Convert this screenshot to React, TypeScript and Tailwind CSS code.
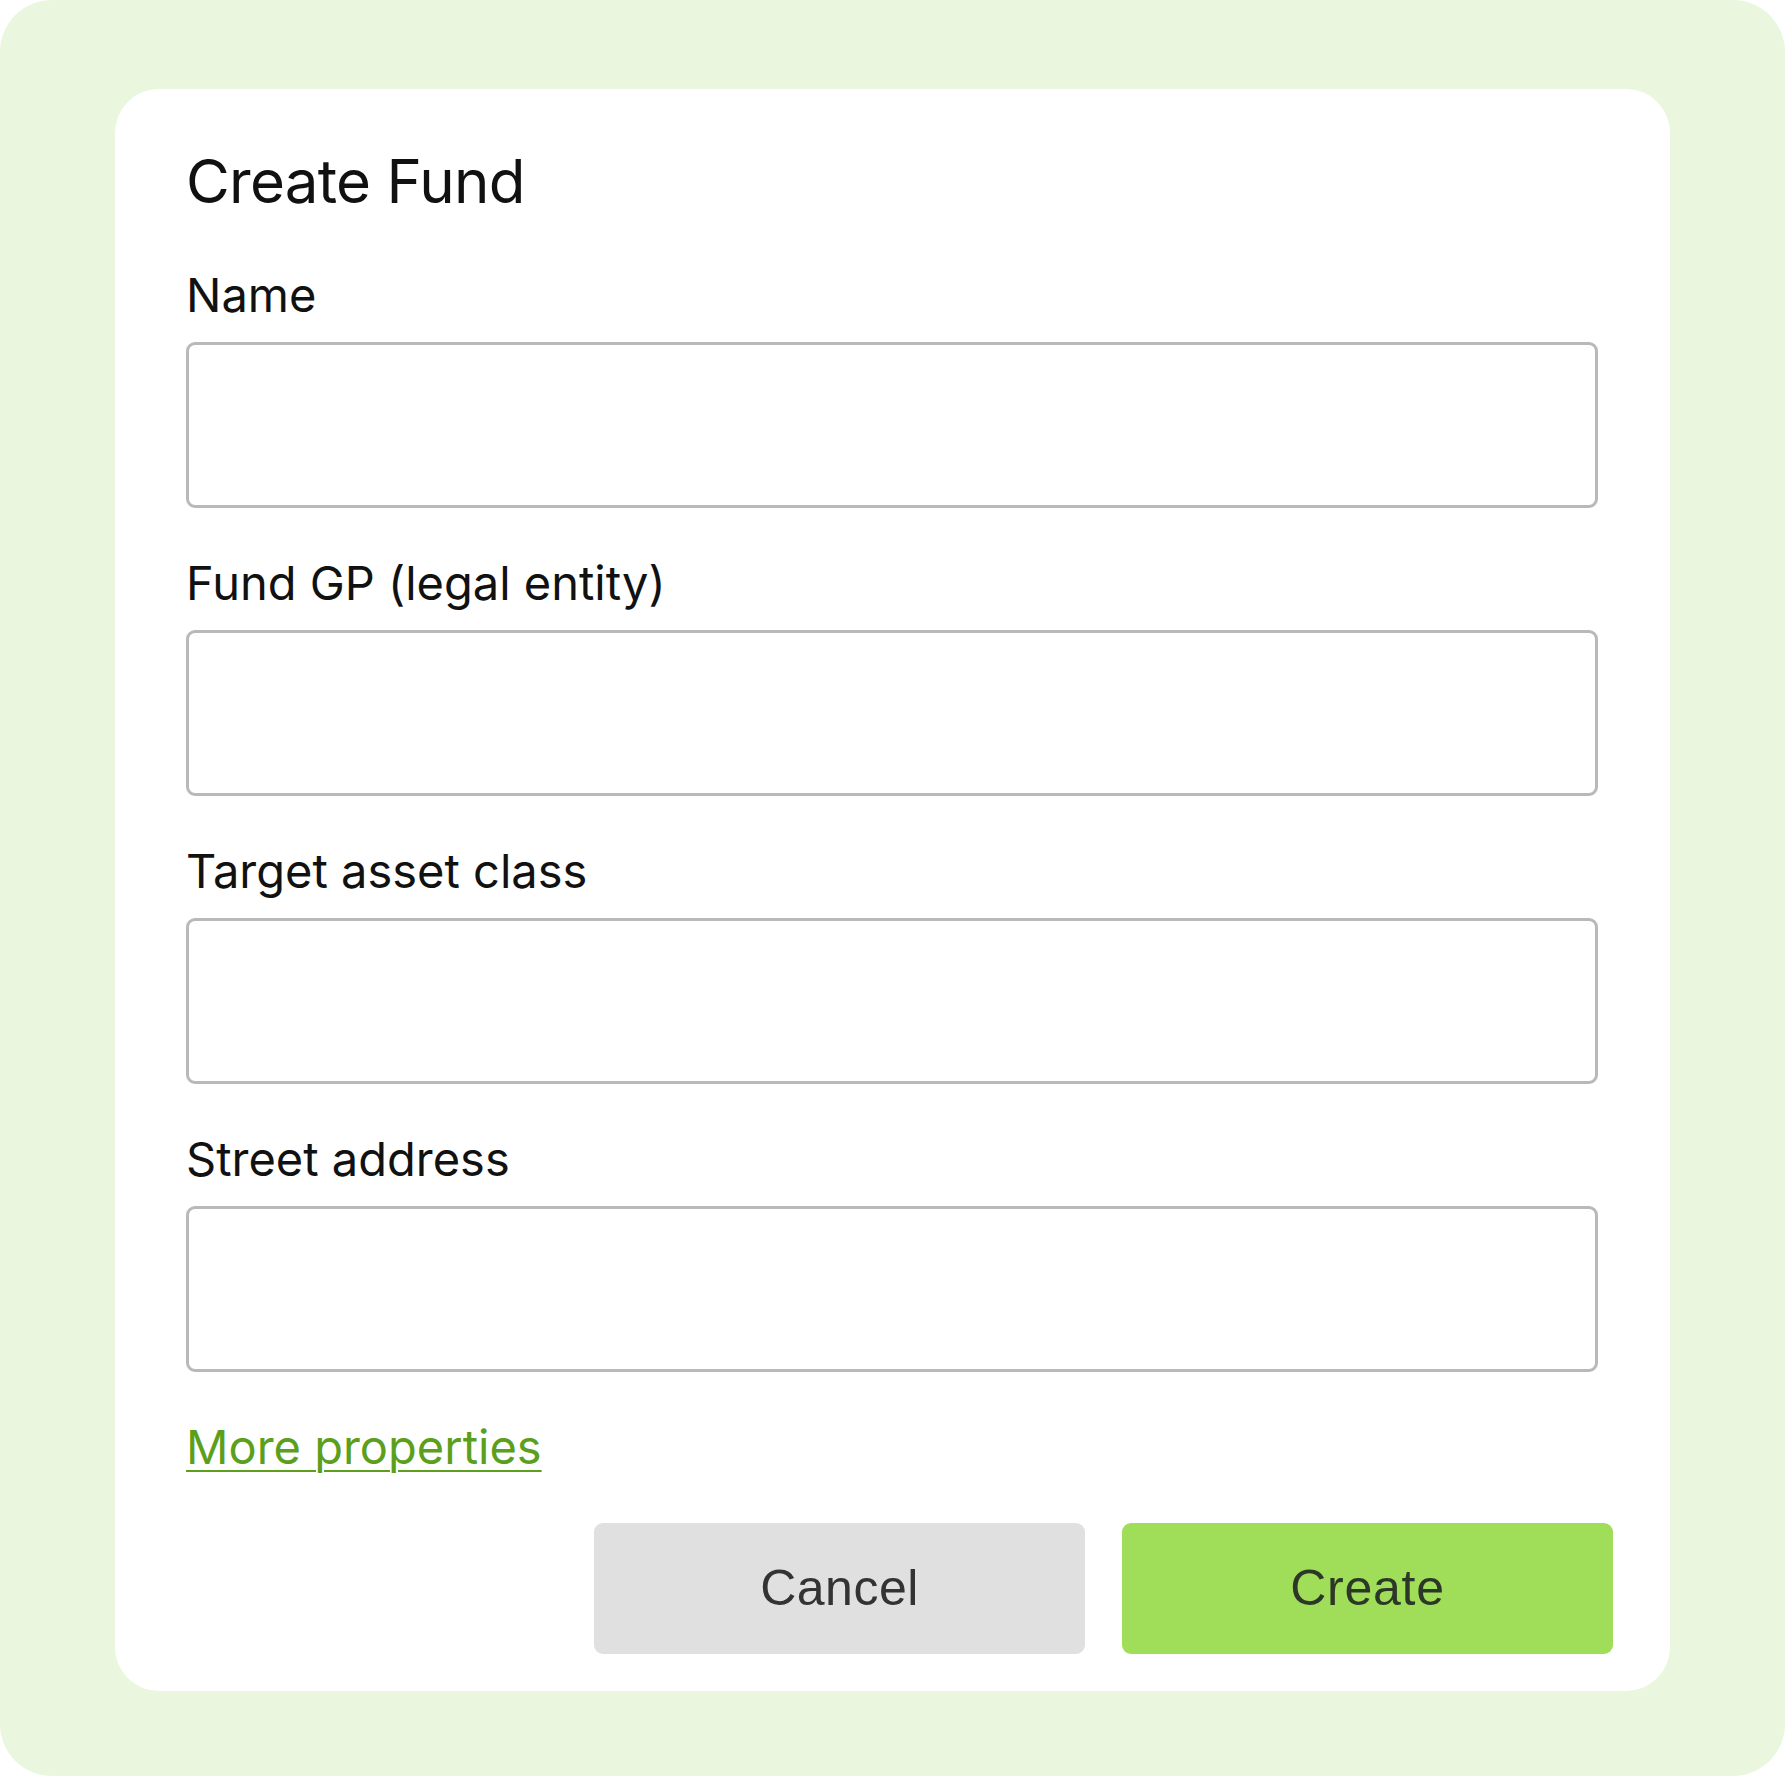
import React from 'react'

const fields = ["Name", "Fund GP (legal entity)", "Target asset class", "Street address"];

const App = () => {
    return (
        <div className="w-[1785px] h-[1776px] bg-white">
            <div className="w-full h-full bg-[#eaf7de] rounded-[52px] pt-[89px] px-[115px]">
                {/* Dialog card */}
                <div
                    className="bg-white rounded-[44px] pt-[62px] pl-[71px] pr-[72px] pb-[37px] h-[1602px]"
                    style={{ fontFamily: 'Inter, "Noto Sans", sans-serif' }}
                >
                    <h1 className="text-[60px] leading-[60px] font-normal text-[#111111] tracking-[-0.012em] mb-[61px]">
                        Create Fund
                    </h1>

                    {fields.map((label) => (
                        <div key={label} className="mb-[52px]">
                            <label className="block text-[47px] leading-[46px] text-[#111111] mb-[24px]">
                                {label}
                            </label>
                            <input
                                type="text"
                                className="block w-full h-[166px] border-[3px] border-[#b9b9b9] rounded-[9px] bg-white outline-none px-4 text-[40px]"
                            />
                        </div>
                    ))}

                    <a
                        href="#"
                        className="inline-block text-[47px] leading-[46px] text-[#5c9f1c] underline decoration-[2px] underline-offset-[6px]"
                    >
                        More properties
                    </a>

                    {/* Actions */}
                    <div className="flex justify-end gap-[37px] mt-[53px] mr-[-15px]">
                        <button
                            className="w-[491px] h-[131px] rounded-[9px] bg-[#e0e0e0] text-[#333333] text-[50px] tracking-[0.01em]"
                            style={{ fontFamily: '"Liberation Sans", Arial, sans-serif' }}
                        >
                            Cancel
                        </button>
                        <button
                            className="w-[491px] h-[131px] rounded-[9px] bg-[#a0dd58] text-[#2c3728] text-[50px] tracking-[0.015em]"
                            style={{ fontFamily: '"Liberation Sans", Arial, sans-serif' }}
                        >
                            Create
                        </button>
                    </div>
                </div>
            </div>
        </div>
    );
};

export default App;
